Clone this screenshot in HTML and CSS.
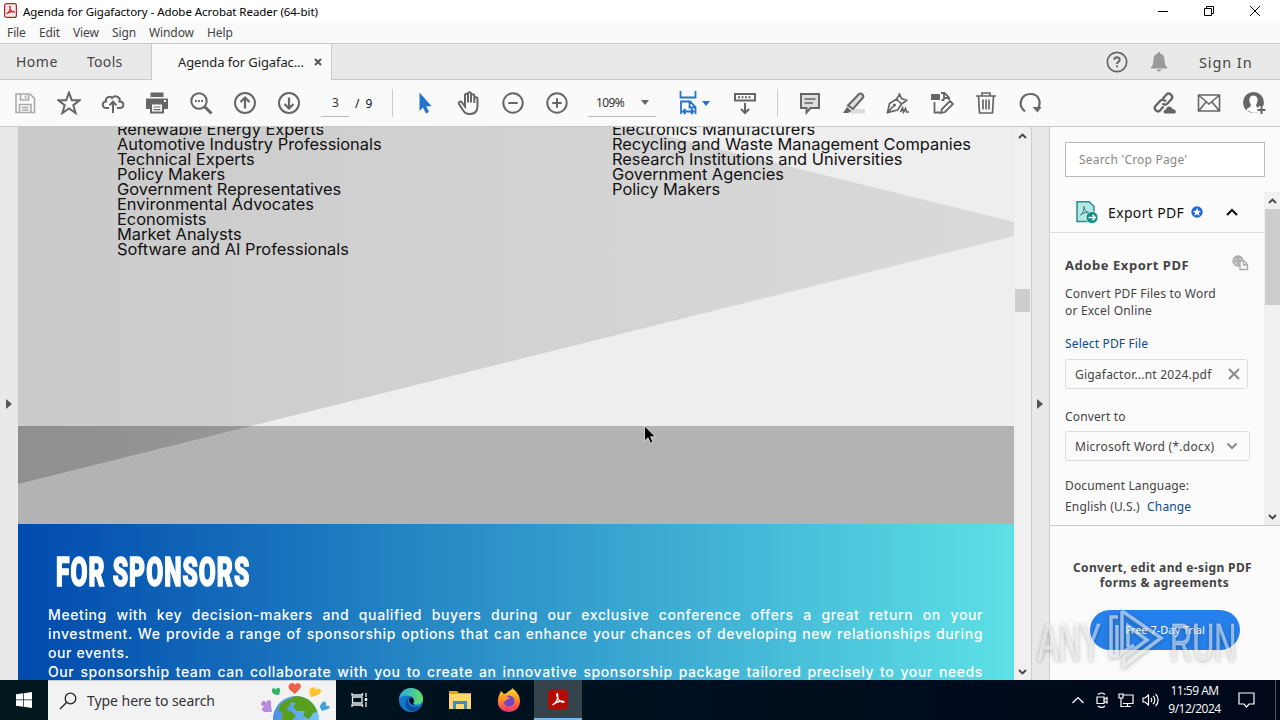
FILE: index.html
```html
<!DOCTYPE html>
<html lang="en">
<head>
    <meta charset="UTF-8">
    <title>Agenda for Gigafactory - Adobe Acrobat Reader (64-bit)</title>
    <link rel="stylesheet" href="styles.css">
</head>
<body>
    <div class="screen">
        <!-- Title bar -->
        <div class="titlebar">
            <svg class="app-icon" width="13" height="15" viewBox="0 0 13 15"><rect x=".6" y=".6" width="11.8" height="13.8" rx="2" fill="#fbe9ea" stroke="#b8242c" stroke-width="1.2"/><path d="M2.5 10.8C4.5 10 6.6 6.500 6.300 3.600C6.200 2.900 5.500 3.400 5.800 4.600C6.400 7 8.500 9 10.400 9.200C11 8 6 8.300 2.500 10.800Z" fill="none" stroke="#c9252d" stroke-width="1.1"/></svg>
            <span class="title-text">Agenda for Gigafactory - Adobe Acrobat Reader (64-bit)</span>
            <div class="window-buttons">
                <svg width="12" height="12" viewBox="0 0 12 12"><path d="M1 6.500H11" class="thin"/></svg>
                <svg width="12" height="12" viewBox="0 0 12 12"><path d="M1.500 3.500H8.500V10.500H1.500ZM3.500 3.500V1.500H10.500V8.500H8.500" class="thin"/></svg>
                <svg width="12" height="12" viewBox="0 0 12 12"><path d="M1 1L11 11M11 1L1 11" class="thin"/></svg>
            </div>
        </div>

        <div class="menubar">
            <span class="m-file">File</span><span class="m-edit">Edit</span><span class="m-view">View</span><span class="m-sign">Sign</span><span class="m-window">Window</span><span class="m-help">Help</span>
        </div>

        <!-- Tabs -->
        <div class="tabbar">
            <span class="tab-home">Home</span>
            <span class="tab-tools">Tools</span>
            <div class="tab-active">
                <span>Agenda for Gigafac...</span>
                <svg width="8" height="8" viewBox="0 0 8 8"><path d="M1 1L7 7M7 1L1 7" stroke="#555" stroke-width="2"/></svg>
            </div>
            <div class="tab-right">
                <svg width="22" height="22" viewBox="0 0 22 22" fill="none" stroke="#666" stroke-width="1.7"><circle cx="11" cy="11" r="9.700"/><path d="M8.300 8.800C8.300 5.500 13.700 5.500 13.700 8.700C13.700 10.800 11 10.800 11 13M11 14.500V16.300" stroke-width="2"/></svg>
                <svg class="bell" width="18" height="20" viewBox="0 0 18 20" fill="#999"><path d="M9 0C10 0 10.300 1 10.300 1.700C14 2.500 14.500 5.500 14.700 9C14.900 12.500 15.500 14 17 15V16.500H1V15C2.500 14 3.100 12.500 3.300 9C3.500 5.500 4 2.500 7.700 1.700C7.700 1 8 0 9 0ZM6.500 17.500H11.500C11 20 7 20 6.500 17.500Z"/></svg>
                <span class="signin">Sign In</span>
            </div>
        </div>

        <!-- Toolbar -->
        <div class="toolbar">
            <div class="tool-group">
                <svg class="disabled" viewBox="0 0 24 24"><path d="M3 3H17L21.500 7.500V21.500H3ZM7.500 3V9H15.500V3M12.500 4.500V7.500M6.500 21V13.500H18V21M9 16.500H15.500M9 19H15.500"/></svg>
                <svg viewBox="0 0 24 24"><path d="M12 1.500L14.700 9.200L22.700 9.300L16.300 14.200L18.600 22L12 17.400L5.400 22L7.700 14.200L1.300 9.300L9.300 9.200Z"/></svg>
                <svg viewBox="0 0 24 24"><path d="M8 17H5.500C.5 17 .7 10.500 5 10.500C4 6 9.500 4.500 11 7C14.500 3 20 7 18.500 10.500C23.500 10.500 23.500 17 19 17H16M12 22V11M8.500 14.200L12 10.700L15.500 14.200"/></svg>
                <svg viewBox="0 0 24 24"><path d="M5.500 1.500H18.500V6H5.500Z" fill="#666" stroke="none"/><path d="M1 7.500H23V18H1Z" fill="#666" stroke="none"/><path d="M6 12.500H18V21.500H6Z" fill="#fff"/><path d="M8.500 16H15.500M8.500 18.700H15.500" stroke-width="1.200"/><path d="M19 10H21" stroke="#fff"/></svg>
                <svg viewBox="0 0 24 24"><circle cx="10" cy="10" r="7.700"/><path d="M15.500 15.500L22.500 22.500" stroke-width="3"/><path d="M6 10H7.800M9.100 10H10.900M12.200 10H14" stroke-width="1.800"/></svg>
                <svg viewBox="0 0 24 24"><circle cx="12" cy="12" r="10"/><path d="M12 17.500V7M7.500 11L12 6.500L16.500 11" stroke-width="2.200"/></svg>
                <svg viewBox="0 0 24 24"><circle cx="12" cy="12" r="10"/><path d="M12 6.500V17M7.500 13L12 17.500L16.500 13" stroke-width="2.200"/></svg>
            </div>
            <span class="page-input">3</span>
            <span class="page-total">/ 9</span>
            <span class="separator"></span>
            <div class="tool-group">
                <svg viewBox="0 0 24 24"><path d="M6.500 1.500V20L10 16.500L13 22.500L16 21L13.200 15.200H18.500Z" fill="#2273c9" stroke="none"/></svg>
                <svg viewBox="0 0 24 24" stroke-width="1.600"><path d="M8 13V4.500C8 2.300 11 2.300 11 4.500V11.500M11 10V3C11 .8 14 .8 14 3V11.500M14 5C14 2.500 17.300 2.500 17.300 5V12M17.300 8C17.300 5.500 20.500 5.500 20.500 8V15C20.500 20.500 17.500 23 13 23C8.500 23 7.500 21.500 5.500 18.500L2 13C1 11 3.600 9.700 5 11.500L8 15.500V11"/></svg>
                <svg viewBox="0 0 24 24"><circle cx="12" cy="12" r="9.700"/><path d="M7.300 12H16.700"/></svg>
                <svg viewBox="0 0 24 24"><circle cx="12" cy="12" r="9.700"/><path d="M7.300 12H16.700M12 7.300V16.700"/></svg>
            </div>
            <div class="zoom-box"><span>109%</span><i class="caret"></i></div>
            <svg class="fit blue" viewBox="0 0 24 24"><path d="M4.500 0V6.500H19.500V0M5 23V10.500H14L19.500 16V23M13.500 11V16.500H19M7.500 20.500H17M9.500 18L7 20.500L9.500 23M15 18L17.500 20.500L15 23" stroke-width="1.800"/></svg>
            <i class="caret blue-caret"></i>
            <svg class="ocr" viewBox="0 0 24 24"><path d="M2 3H22V9.500H2ZM12 12V21.500M8 18L12 22L16 18"/><path d="M5 6.200H19" stroke-dasharray="2 1.500"/></svg>
            <span class="separator sep-two"></span>
            <div class="tool-group">
                <svg viewBox="0 0 24 24"><path d="M3 3H21V17H12.500L8.500 21.500V17H3Z" fill="#ddd"/><path d="M6.500 8H17.500M6.500 12H15" stroke-width="1.500"/></svg>
                <svg viewBox="0 0 24 24"><path d="M10 18H23V22.500H7Z" fill="#ddd" stroke="none"/><path d="M6 14.500L17 3C19 1.500 22.500 4.500 21 6.500L11 18Z" fill="#ddd"/><path d="M5 16L9.500 20L6 22H1Z" fill="#666" stroke="none"/></svg>
                <svg viewBox="0 0 24 24"><path d="M1.500 21.500L3.500 12.500L10.500 8L15.500 13L11.500 19ZM1.500 21.500L8 14.500M10.500 8L14 3M15.500 13L20.500 9.500M13 2L15.500 7.500L21.500 9.500" stroke-width="1.700"/><circle cx="8.500" cy="14" r="1.500" fill="#666" stroke="none"/><path d="M14.500 21L16.500 17L17.500 21L19.500 17.500L20.500 21H23" stroke-width="1.700"/></svg>
                <svg viewBox="0 0 24 24"><path d="M1 3H10V9H1Z" fill="#666" stroke="none"/><path d="M4.500 11V21.500H10M11 2H14.500L19 6.500V9M14 2V7H19M11.500 9H14.500M11 22L12 18L20 10L23 13L15 21Z" stroke-width="1.800"/></svg>
                <svg viewBox="0 0 24 24"><path d="M2 5H22M8 5V2H16V5M4.500 5L5.500 22H18.500L19.500 5M9 8.500V18.500M12 8.500V18.500M15 8.500V18.500" stroke-width="1.700"/></svg>
                <svg viewBox="0 0 24 24"><path d="M7 20.500C-1 14 3 3 12.500 3C21 3 23.500 11 20 18" stroke-width="2.200"/><path d="M14.500 16H23.500L19.500 21.500Z" fill="#666" stroke="none"/></svg>
            </div>
            <div class="tool-group share-group">
                <svg viewBox="0 0 24 24"><path d="M10.500 8L14.500 3.500C17 .8 22 5 19.500 8L15.500 12.500C14 14 12 14 10.500 12.500M14 10.500C12 8.500 9.500 8.500 8 10L3.500 15C1 18 5.500 22 8 19.500L11.500 15.500" stroke-width="2.400"/><path d="M13 22.500C11 22.500 11 18.500 14 18.500C14.500 14.500 19.500 14.500 20.500 18C24.500 18 24.500 22.500 22.500 22.500Z" fill="#666" stroke="none"/></svg>
                <svg viewBox="0 0 24 24"><path d="M1.500 4H22.500V20H1.500ZM2 4.500L12 13L22 4.500M2 19.500L9 11M22 19.500L15 11" stroke-width="1.600"/></svg>
                <svg viewBox="0 0 24 24"><circle cx="11.500" cy="11.500" r="10.500" fill="#666" stroke="none"/><path d="M4.500 19.500C5 16 9.500 17 8.800 13.500C6 9 7.500 4.500 11.500 4.500C15.500 4.500 17 9 14.200 13.500C13.500 17 18 16 18 20L12 22Z" fill="#fff" stroke="none"/><path d="M19.500 15V23M15.500 19H23.500" stroke="#fff" stroke-width="5"/><path d="M19.500 15V23M15.500 19H23.500"/></svg>
            </div>
        </div>

        <!-- Document and side panel -->
        <div class="main">
            <div class="left-strip"><i class="arrow-right"></i></div>

            <div class="document">
                <div class="page page-audience">
                    <svg class="page-shapes" width="996" height="397" viewBox="0 0 996 397">
                        <defs>
                            <linearGradient id="wedge"><stop offset="0" stop-color="#cacaca"/><stop offset="1" stop-color="#dadada"/></linearGradient>
                            <linearGradient id="wedgeDark"><stop offset="0" stop-color="#8f8f8f"/><stop offset="1" stop-color="#979797"/></linearGradient>
                        </defs>
                        <rect width="996" height="299" fill="#eeeeee"/>
                        <path d="M0 0H611L996 95V109L233 299H0Z" fill="url(#wedge)"/>
                        <rect y="299" width="996" height="98" fill="#b3b3b3"/>
                        <path d="M0 299H233L0 357Z" fill="url(#wedgeDark)"/>
                    </svg>
                    <div class="audience-columns">
                        <div class="audience-list">
                            <div>Renewable Energy Experts</div>
                            <div>Automotive Industry Professionals</div>
                            <div>Technical Experts</div>
                            <div>Policy Makers</div>
                            <div>Government Representatives</div>
                            <div>Environmental Advocates</div>
                            <div>Economists</div>
                            <div>Market Analysts</div>
                            <div>Software and AI Professionals</div>
                        </div>
                        <div class="audience-list">
                            <div>Electronics Manufacturers</div>
                            <div>Recycling and Waste Management Companies</div>
                            <div>Research Institutions and Universities</div>
                            <div>Government Agencies</div>
                            <div>Policy Makers</div>
                        </div>
                    </div>
                </div>
                <div class="page page-sponsors">
                    <h1>FOR SPONSORS</h1>
                    <div class="sponsor-text">
                        <div class="full">Meeting with key decision-makers and qualified buyers during our exclusive conference offers a great return on your</div>
                        <div class="full">investment. We provide a range of sponsorship options that can enhance your chances of developing new relationships during</div>
                        <div>our events.</div>
                        <div class="full">Our sponsorship team can collaborate with you to create an innovative sponsorship package tailored precisely to your needs</div>
                    </div>
                </div>
            </div>

            <div class="doc-scroll">
                <svg width="9" height="6" viewBox="0 0 9 6"><path d="M1 5L4.500 1.500L8 5" class="chev"/></svg>
                <div class="doc-thumb"></div>
                <svg class="bottom" width="9" height="6" viewBox="0 0 9 6"><path d="M1 1L4.500 4.500L8 1" class="chev"/></svg>
            </div>
            <div class="right-strip"><i class="arrow-right"></i></div>

            <div class="side-panel">
                <div class="search-box"><span>Search 'Crop Page'</span></div>
                <div class="panel-body">
                    <div class="panel-content">
                        <div class="export-head">
                            <svg width="24" height="24" viewBox="0 0 24 24"><path d="M2 1.700H14L19 6.500V21.500H2Z" fill="#b5e8e4" stroke="#2b8c88" stroke-width="1.500"/><path d="M5.500 15C8 14 9.500 9 9 6.500C8.500 8.500 11 12 14 12.500C11 12 8 13 5.500 15Z" fill="none" stroke="#2b7774" stroke-width="1"/><circle cx="17" cy="17.500" r="6" fill="#138d87" stroke="#fafafa" stroke-width=".7"/><path d="M13.500 17.500H20M17.500 14.800L20.200 17.500L17.500 20.200" fill="none" stroke="#fff" stroke-width="1.600"/></svg>
                            <span>Export PDF</span>
                            <svg class="badge" width="12" height="12" viewBox="0 0 12 12"><circle cx="6" cy="6" r="5.700" fill="#2266dc"/><path d="M6 2L7.200 4.700L10 5L7.900 6.900L8.500 9.700L6 8.300L3.500 9.700L4.100 6.900L2 5L4.800 4.700Z" fill="#fff"/></svg>
                            <svg class="up" width="12" height="8" viewBox="0 0 12 8"><path d="M1 7L6 2L11 7" fill="none" stroke="#111" stroke-width="2.200"/></svg>
                        </div>
                        <div class="export-body">
                            <div class="export-title">
                                <b>Adobe Export PDF</b>
                                <svg width="17" height="16" viewBox="0 0 17 16" fill="none" stroke="#aaa" stroke-width="1.300"><circle cx="6" cy="6" r="5" fill="#ccc"/><path d="M1 6H11M6 1V11M2.500 3H9.500"/><path d="M8 6H12L15.500 9.500V14.500H8Z" fill="#fafafa"/><path d="M11.500 6.500V10H15"/></svg>
                            </div>
                            <div class="export-desc">Convert PDF Files to Word<br>or Excel Online</div>
                            <div class="link">Select PDF File</div>
                            <div class="field file-field"><span>Gigafactor...nt 2024.pdf</span><svg width="12" height="12" viewBox="0 0 12 12"><path d="M1 1L11 11M11 1L1 11" stroke="#8a8a8a" stroke-width="2"/></svg></div>
                            <div class="field-label">Convert to</div>
                            <div class="field format-field"><span>Microsoft Word (*.docx)</span><svg width="12" height="8" viewBox="0 0 12 8"><path d="M1.500 1.500L6 6L10.500 1.500" fill="none" stroke="#8a8a8a" stroke-width="2"/></svg></div>
                            <div class="language">Document Language:<br>English (U.S.) <span class="link-inline">Change</span></div>
                        </div>
                    </div>
                    <div class="panel-scroll">
                        <svg width="9" height="6" viewBox="0 0 9 6"><path d="M1 5L4.500 1.500L8 5" class="chev"/></svg>
                        <div class="panel-thumb"></div>
                        <svg class="bottom" width="9" height="6" viewBox="0 0 9 6"><path d="M1 1L4.500 4.500L8 1" class="chev"/></svg>
                    </div>
                </div>
                <div class="promo">
                    <b>Convert, edit and e-sign PDF<br><span class="promo-second">forms &amp; agreements</span></b>
                    <div class="trial-button">Free 7-Day Trial</div>
                </div>
            </div>
        </div>

        <!-- Taskbar -->
        <div class="taskbar">
            <div class="start"><svg width="16" height="16" viewBox="0 0 16 16" fill="#fff"><path d="M0 2.300L7 1.300V7.600H0ZM7.700 1.200L16 0V7.600H7.700ZM0 8.300H7V14.700L0 13.700ZM7.700 8.300H16V16L7.700 14.800Z"/></svg></div>
            <div class="task-search">
                <svg width="18" height="18" viewBox="0 0 18 18" fill="none" stroke="#222" stroke-width="1.300"><circle cx="11.500" cy="6.500" r="5.300"/><path d="M7.700 10.300L1 17"/></svg>
                <span>Type here to search</span>
                <svg class="globe" width="72" height="38" viewBox="0 0 72 38">
                    <defs><linearGradient id="sea"><stop offset="0" stop-color="#4c8de8"/><stop offset="1" stop-color="#74c5f5"/></linearGradient></defs>
                    <circle cx="36" cy="37" r="23" fill="url(#sea)"/>
                    <path d="M32 15C43 12 54 19 57 30L53 31L49 37L43 34L45 29L37 29L33 25L36 21L30 20Z" fill="#579f1d"/>
                    <path d="M21 22L28 17L32 18L30 23L26 27L32 30L36 34L32 38H21L23 32L18 28Z" fill="#579f1d"/>
                    <path d="M29 3C31 0 34 1 35 3C36 0 41 1 41 4C41 7 37 9 35 12C32 9 27 7 29 3Z" fill="#ef604b"/>
                    <path d="M12 9C11 6 15 5 16 8C17 4 21 6 20 9L19 13C16 13 12 12 12 9Z" fill="#30b264"/>
                    <path d="M51 6C54 4 56 6 56 8C59 5 63 8 60 11C58 14 54 14 51 15C50 12 48 8 51 6Z" fill="#ffc22b"/>
                    <path d="M2 20C4 17 6 20 6 21C8 16 12 18 11 22C11 26 12 27 12 30C8 29 5 32 2 28C1 26 4 25 4 24C1 24 0 22 2 20Z" fill="#b88be0"/>
                    <path d="M62 21C64 18 67 20 66 24C70 23 71 26 68 27L62 29C61 26 58 25 62 21Z" fill="#3fa2df"/>
                </svg>
            </div>
            <div class="task-icon"><svg width="18" height="16" viewBox="0 0 18 16" fill="none" stroke="#eee" stroke-width="1.300"><path d="M1 1V3H11.500V1M1 15V13H11.500V15M1.500 5H11V11H1.500ZM15 1V5M15 10V15"/><path d="M15 6V9" stroke-width="2.500"/></svg></div>
            <div class="task-icon edge">
                <svg width="24" height="24" viewBox="0 0 24 24">
                    <defs><linearGradient id="edgeTop"><stop offset="0" stop-color="#27a8e0"/><stop offset="1" stop-color="#65df65"/></linearGradient></defs>
                    <circle cx="12" cy="12" r="12" fill="#1479cb"/><path d="M0 11C1 4 6 0 12 0C19 0 24 5 24 11C24 16 18 18 14 16C16 14 16 9 11 8C6 7 2 8 0 11Z" fill="url(#edgeTop)"/><path d="M10 10C6 14 11 21 21 19C14 28 2 20 8 11Z" fill="#0d4f9d"/><path d="M10 12C10 8 15 9 15 13C14 15 14 16 16 17C13 17 10 15 10 12Z" fill="#071722"/>
                </svg>
            </div>
            <div class="task-icon"><svg width="22" height="20" viewBox="0 0 22 20"><path d="M0 1H8L10 3H22V19H0Z" fill="#e8a51c"/><path d="M0 4H22V19H0Z" fill="#ffd768"/><path d="M4 19V11H18V19H15V14H7V19Z" fill="#3a8ec8"/></svg></div>
            <div class="task-icon">
                <svg width="24" height="24" viewBox="0 0 24 24"><defs><linearGradient id="fox" x2="0" y2="1"><stop offset="0" stop-color="#ffe02f"/><stop offset=".5" stop-color="#ff8b24"/><stop offset="1" stop-color="#ed2b71"/></linearGradient></defs><path d="M4 3L7 6L10 5C11 2 15 3 15 0C19 3 23 7 23 13C23 20 18 24 12 24C5 24 0 19 1 12C1 9 2 7 4 3Z" fill="url(#fox)"/><circle cx="12" cy="13" r="5.500" fill="#7445c7"/><path d="M4 8C8 6 9 8 13 10C11 12 8 11 8 14C6 13 5 11 4 8Z" fill="#ff9c25"/></svg>
            </div>
            <div class="task-icon current"><svg width="20" height="21" viewBox="0 0 22 22"><rect width="22" height="22" rx="4" fill="#b30b00"/><path d="M5 17C9 15 12 10 10.500 5C9.500 4 9.500 6 10 7.500C11 11 14 14 17.500 14C18 12 10 12 5 17Z" fill="none" stroke="#fff" stroke-width="1.500"/></svg></div>
            <div class="tray">
                <svg width="12" height="8" viewBox="0 0 12 8"><path d="M.5 7L6 1.500L11.500 7"/></svg>
                <svg width="12" height="16" viewBox="0 0 12 16"><path d="M1 5H8V11.500H1ZM8 7.500L11 5.500V11L8 9M2 2.500C4 .5 7 .5 9 2.500M2 14C4 15.700 7 15.700 9 14"/></svg>
                <svg width="16" height="15" viewBox="0 0 16 15"><path d="M5 2H15V10.500H5M9.500 10.500V13.500M6.500 13.500H13M1 1H5V5H1ZM3 5V13.500H6"/></svg>
                <svg width="18" height="14" viewBox="0 0 18 14"><path d="M1 5H3L6.500 2V12L3 9H1ZM9 5C10 6 10 8 9 9M11 3C13.500 5 13.500 9 11 11M13.500 1C17 4 17 10 13.500 13"/></svg>
                <div class="clock">11:59 AM<br>9/12/2024</div>
                <svg class="notify" width="17" height="16" viewBox="0 0 17 16"><path d="M1 1H16V12H11L8.500 15L6 12H1Z"/></svg>
            </div>
            <div class="show-desktop"></div>
        </div>

        <!-- Mouse pointer -->
        <svg class="pointer" width="12" height="19" viewBox="0 0 12 19"><path d="M.5 .8V16L4 12.700L6.500 18.300L9 17.200L6.600 11.800H11.300Z" fill="#000" stroke="#fff" stroke-width=".7"/></svg>

        <!-- Watermark -->
        <div class="watermark">
            <span class="any">ANY</span>
            <svg width="58" height="64" viewBox="0 0 58 64"><path d="M10 9H3V48H9V17M14 3L53 30L16 58V49L39 32L20 18V39M14 3V45L26 37" fill="none"/></svg>
            <span class="run">RUN</span>
        </div>
    </div>
</body>
</html>
```

FILE: styles.css
```css
* {
    box-sizing: border-box;
}

body {
    margin: 0;
    font-family: 'Noto Sans', 'Open Sans', sans-serif;
    font-size: 12px;
    color: #333;
    overflow: hidden;
}

svg {
    display: block;
    flex-shrink: 0;
}

.screen {
    position: relative;
    width: 1280px;
    height: 720px;
    display: flex;
    flex-direction: column;
    overflow: hidden;
    white-space: nowrap;
}

/* Title and menu */
.titlebar {
    height: 23px;
    background: #fff;
    display: flex;
    align-items: center;
    padding-left: 4px;
}

.app-icon {
    margin-right: 6px;
    margin-top: -3px;
}

.title-text {
    font-size: 11.5px;
    color: #000;
    letter-spacing: -0.05px;
}

.window-buttons {
    margin: -2px 19px 0 auto;
    display: flex;
    gap: 34px;
}

.thin {
    fill: none;
    stroke: #000;
    stroke-width: 1;
}

.menubar {
    height: 21px;
    background: #fafafa;
    border-bottom: 1px solid #c8c8c8;
    padding: 0 0 2px 7px;
    display: flex;
    align-items: center;
    color: #444;
    letter-spacing: -0.1px;
}

.menubar span {
    width: 38px;
}

.menubar .m-file {
    width: 32px;
}

.menubar .m-edit {
    width: 34px;
}

.menubar .m-view {
    width: 39px;
}

.menubar .m-sign {
    width: 37px;
}

.menubar .m-window {
    width: 58px;
}

/* Tabs */
.tabbar {
    height: 36px;
    background: #e9e9e9;
    border-bottom: 1px solid #c8c8c8;
    display: flex;
    align-items: center;
    font-size: 14px;
    color: #444;
}

.tab-home {
    width: 87px;
    padding-left: 16px;
    letter-spacing: 0.5px;
}

.tab-tools {
    width: 64px;
    letter-spacing: 0.3px;
}

.tab-active {
    width: 181px;
    height: 36px;
    background: #fafafa;
    border-left: 1px solid #c8c8c8;
    border-right: 1px solid #c8c8c8;
    padding-left: 26px;
    display: flex;
    align-items: center;
    font-size: 13px;
    color: #222;
}

.tab-active span {
    width: 136px;
    letter-spacing: -0.1px;
}

.tab-right {
    margin-left: auto;
    width: 174px;
    display: flex;
    align-items: center;
}

.bell {
    margin-left: 22px;
}

.signin {
    margin-left: 31px;
    font-size: 14.5px;
    letter-spacing: 0.9px;
}

/* Toolbar */
.toolbar {
    height: 47px;
    background: #fafafa;
    border-bottom: 1px solid #c8c8c8;
    display: flex;
    align-items: center;
    padding-left: 3px;
}

.toolbar svg {
    width: 24px;
    height: 24px;
    fill: none;
    stroke: #666;
    stroke-width: 2;
}

.toolbar svg.disabled {
    stroke: #aaa;
    stroke-width: 1.6;
}

.toolbar svg.blue {
    stroke: #2273c9;
}

.tool-group {
    display: flex;
    gap: 20px;
    padding: 0 10px;
}

.page-input {
    width: 28px;
    height: 27px;
    margin-left: 10px;
    padding: 4px 0 0 11px;
    border-bottom: 1px solid #bbb;
}

.page-total {
    width: 43px;
    padding-left: 6px;
    word-spacing: 3px;
    color: #111;
}

.separator {
    width: 1px;
    height: 28px;
    background: #ccc;
    margin-right: 10px;
}

.zoom-box {
    width: 68px;
    height: 27px;
    margin-left: 9px;
    padding-left: 8px;
    border-bottom: 1px solid #bbb;
    display: flex;
    align-items: center;
    letter-spacing: -0.6px;
}

.zoom-box .caret {
    margin-left: auto;
    margin-right: 7px;
}

.caret {
    border: 4px solid transparent;
    border-top: 5px solid #666;
    border-bottom: 0;
}

.fit {
    margin-left: 20px;
}

.blue-caret {
    border-top-color: #2273c9;
    margin-left: 2px;
}

.ocr {
    margin-left: 23px;
}

.sep-two {
    margin-left: 20px;
    margin-right: 10px;
}

.share-group {
    margin-left: auto;
    gap: 21px;
    padding-right: 14px;
}

/* Main area */
.main {
    height: 553px;
    display: flex;
}

.left-strip {
    width: 18px;
    background: #e9e9e9;
    display: flex;
    align-items: center;
    padding-left: 6px;
}

.arrow-right {
    border: 5px solid transparent;
    border-left: 6px solid #555;
    border-right: 0;
}

.document {
    width: 996px;
    overflow: hidden;
}

.page-audience {
    height: 397px;
    position: relative;
    overflow: hidden;
}

.page-shapes {
    position: absolute;
    left: 0;
    top: 0;
}

.audience-columns {
    position: relative;
    display: flex;
    padding-left: 99px;
    margin-top: -5px;
    font-family: Inter, sans-serif;
    font-size: 16.4px;
    line-height: 15px;
    color: #111;
}

.audience-list {
    width: 495px;
    flex-shrink: 0;
}

.page-sponsors {
    height: 156px;
    overflow: hidden;
    background: linear-gradient(to right, #004aad, #5de0e6);
    color: #fff;
    padding: 24px 31px 0 30px;
}

.page-sponsors h1 {
    margin: 0 0 0 8px;
    font-family: Roboto, sans-serif;
    font-size: 41px;
    font-weight: 900;
    line-height: 48px;
    transform: scaleX(0.6);
    transform-origin: left;
    -webkit-text-stroke: 1.6px #fff;
    letter-spacing: 1.7px;
}

.sponsor-text {
    margin-top: 9px;
    font-family: Inter, sans-serif;
    font-size: 14px;
    font-weight: 500;
    line-height: 19px;
    letter-spacing: 0.6px;
}

.sponsor-text .full {
    text-align: justify;
    text-align-last: justify;
}

/* Scrollbars */
.doc-scroll {
    width: 17px;
    background: #f0f0f0;
    display: flex;
    flex-direction: column;
    align-items: center;
    padding: 6px 0 5px;
}

.chev {
    fill: none;
    stroke: #444;
    stroke-width: 1.8;
}

.doc-thumb {
    width: 15px;
    height: 23px;
    margin-top: 150px;
    background: #cdcdcd;
}

.bottom {
    margin-top: auto;
}

.right-strip {
    width: 19px;
    background: #e9e9e9;
    border-left: 1px solid #ccc;
    border-right: 1px solid #ccc;
    display: flex;
    align-items: center;
    padding-left: 5px;
}

/* Side panel */
.side-panel {
    width: 230px;
    background: #fbfbfb;
}

.search-box {
    width: 200px;
    height: 35px;
    margin: 15px 0 15px 15px;
    border: 1px solid #bbb;
    background: #fff;
    color: #888;
    padding-left: 13px;
    display: flex;
    align-items: center;
    letter-spacing: 0.2px;
}

.panel-body {
    height: 334px;
    display: flex;
    border-bottom: 1px solid #c8c8c8;
}

.panel-content {
    width: 214px;
}

.export-head {
    height: 41px;
    border-bottom: 1px solid #ddd;
    display: flex;
    align-items: center;
    padding-left: 25px;
    font-size: 14px;
    color: #111;
}

.export-head span {
    margin-left: 9px;
    letter-spacing: 0.35px;
}

.badge {
    margin-left: 7px;
}

.up {
    margin-left: 23px;
}

.export-body {
    padding: 22px 0 0 15px;
    color: #444;
    letter-spacing: 0.15px;
}

.export-title {
    display: flex;
    width: 184px;
    height: 20px;
    align-items: center;
    justify-content: space-between;
    font-size: 13px;
    letter-spacing: 0.55px;
}

.export-title svg {
    margin-top: -4px;
}

.export-desc {
    margin-top: 10px;
    line-height: 17px;
    letter-spacing: 0.2px;
}

.link {
    color: #0b4a94;
    line-height: 17px;
    margin-top: 16px;
}

.link-inline {
    color: #0b4a94;
    margin-left: 4px;
}

.field {
    height: 30px;
    border: 1px solid #ddd;
    border-radius: 3px;
    display: flex;
    align-items: center;
    justify-content: space-between;
    padding: 0 7px 0 9px;
    letter-spacing: 0.22px;
}

.file-field {
    width: 183px;
    margin-top: 7px;
}

.field-label {
    margin-top: 19px;
    line-height: 17px;
}

.format-field {
    width: 185px;
    margin-top: 6px;
    padding-right: 11px;
    letter-spacing: 0.26px;
}

.language {
    margin-top: 14px;
    line-height: 21px;
}

.panel-scroll {
    width: 16px;
    background: #f0f0f0;
    display: flex;
    flex-direction: column;
    align-items: center;
    padding: 6px 0 5px;
}

.panel-thumb {
    width: 15px;
    height: 96px;
    margin-top: 5px;
    background: #cdcdcd;
}

.promo {
    padding-top: 34px;
    text-align: center;
    font-size: 12px;
    line-height: 15px;
    color: #444;
    padding-right: 5px;
}

.promo b {
    letter-spacing: 0.38px;
}

.promo-second {
    padding-left: 4px;
}

.trial-button {
    width: 150px;
    height: 40px;
    margin: 20px 0 0 40px;
    border-radius: 20px;
    background: #2680eb;
    color: #fff;
    font-size: 11px;
    line-height: 40px;
}

/* Taskbar */
.taskbar {
    height: 40px;
    background: linear-gradient(to right, #00171d, #00101f 50%, #00081a);
    display: flex;
    color: #fff;
}

.start {
    width: 48px;
    display: flex;
    align-items: center;
    justify-content: center;
}

.task-search {
    width: 288px;
    background: #f2f2f2;
    border-top: 1px solid #ccc;
    display: flex;
    align-items: center;
    padding-left: 11px;
    font-size: 14px;
    color: #333;
}

.task-search span {
    margin-left: 10px;
    width: 173px;
    letter-spacing: -0.05px;
}

.task-icon {
    width: 48px;
    margin-right: 1px;
    display: flex;
    align-items: center;
    justify-content: center;
}

.task-icon.edge {
    margin-left: 2px;
}

.task-icon.current {
    background: #34434c;
    border-bottom: 2px solid #76b9ed;
}

.tray {
    margin-left: auto;
    width: 203px;
    display: flex;
    align-items: center;
}

.tray svg {
    fill: none;
    stroke: #fff;
    stroke-width: 1.2;
    margin-right: 12px;
}

.tray svg:nth-child(2) {
    margin-right: 10px;
}

.tray svg:nth-child(3) {
    margin-right: 8px;
}

.tray svg:nth-child(4) {
    margin-right: 8px;
}

.clock {
    width: 53px;
    text-align: center;
    line-height: 18px;
    letter-spacing: -0.5px;
    font-family: 'Open Sans', sans-serif;
}

.tray .notify {
    margin-left: 17px;
    margin-right: 0;
}

.show-desktop {
    width: 5px;
    border-left: 1px solid #4a5560;
}

/* Overlays */
.pointer {
    position: absolute;
    left: 644px;
    top: 425px;
}

.watermark {
    position: absolute;
    left: 1038px;
    top: 608px;
    width: 196px;
    height: 64px;
    display: flex;
    align-items: center;
    font-family: 'Liberation Sans', sans-serif;
    font-size: 52px;
    color: rgba(255, 255, 255, 0.5);
    filter: drop-shadow(0 1px 2px rgba(0, 0, 0, 0.5));
}

.watermark span {
    width: 66px;
    padding-top: 3px;
    transform: scaleX(0.59);
    transform-origin: left;
    -webkit-text-stroke: 0.8px rgba(255, 255, 255, 0.35);
}

.watermark svg {
    margin: 0 4px 0 4px;
    stroke: rgba(255, 255, 255, 0.55);
    stroke-width: 3.5;
}
```
